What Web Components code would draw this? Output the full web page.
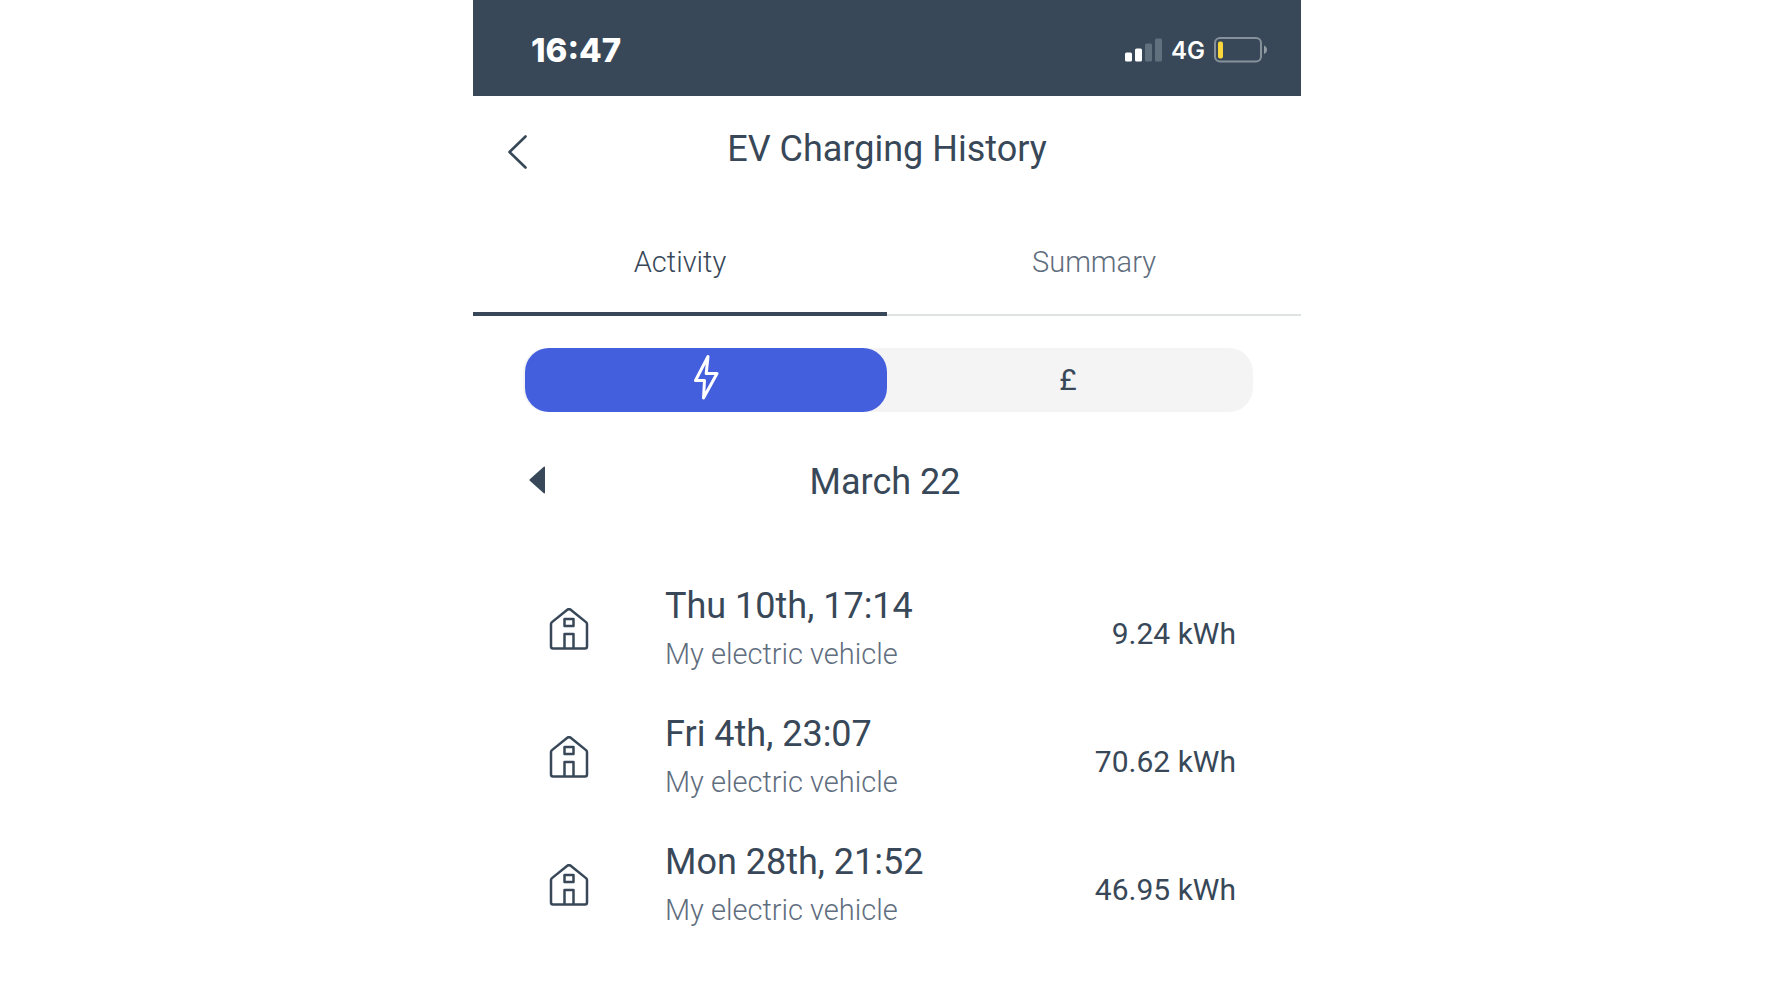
<!DOCTYPE html>
<html lang="en">
<head>
<meta charset="utf-8">
<meta name="viewport" content="width=device-width, initial-scale=1">
<title>EV Charging History</title>
<style>
  :root {
    --ink: #384858;
    --muted: #5f6e7e;
    --accent: #445fde;
    --track: #f4f4f4;
    --rule: #dfe2e2;
    --heading: 36px;
    --body: 30px;
    --light: 29px;
  }
  body { margin: 0; background: #fff; color: var(--ink); font-family: Roboto, "Open Sans", sans-serif; }
</style>
</head>
<body>
<ev-history-app></ev-history-app>

<script>
const define = (name, html, init) => {
  const template = document.createElement('template');
  template.innerHTML = `<style>
    *, *::before { box-sizing: border-box; }
    button { font: inherit; color: inherit; background: none; border: 0; padding: 0; margin: 0; cursor: pointer; }
    svg { display: block; flex: none; }
  </style>` + html;
  customElements.define(name, class extends HTMLElement {
    constructor() {
      super();
      this.attachShadow({ mode: 'open' }).append(template.content.cloneNode(true));
    }
    connectedCallback() { if (init) init(this, this.shadowRoot); }
  });
};

define('status-bar', `
  <style>
    :host { display: flex; align-items: center; justify-content: space-between; height: 96px;
      padding: 4px 34px 0 58px; box-sizing: border-box; background: var(--ink); color: #fff;
      font-family: Inter, sans-serif; }
    .time { font-size: 33px; line-height: 40px; font-weight: 800; }
    .right { display: flex; align-items: center; gap: 9px; }
    .net { font-size: 24px; line-height: 32px; font-weight: 600; padding-top: 2px; }
  </style>
  <span class="time"><slot></slot></span>
  <div class="right">
    <svg width="37" height="24" viewBox="0 0 37 24" aria-hidden="true">
      <g fill="#fff"><rect y="14.500" width="7" height="9" rx="1.500"/><rect x="10" y="10.500" width="7" height="13" rx="1.500"/></g>
      <g fill="#60707d"><rect x="20" y="5.500" width="7" height="18" rx="1.500"/><rect x="30" y=".5" width="7" height="23" rx="1.500"/></g>
    </svg>
    <span class="net"><slot name="network"></slot></span>
    <svg width="53" height="26" viewBox="0 0 53 26" aria-hidden="true">
      <rect x="1" y="1" width="46" height="23.500" rx="5" fill="none" stroke="#87919b" stroke-width="2"/>
      <rect x="4" y="4.500" width="5" height="17" rx="2" fill="#fad83c"/>
      <path d="M50 8.500c4 1.500 4 7 0 8.500z" fill="#929ca5"/>
    </svg>
  </div>`);

define('page-header', `
  <style>
    :host { display: grid; grid-template-columns: 52px 1fr 52px; align-items: center; height: 106px; padding: 0 18px; box-sizing: border-box; }
    h1 { margin: 0; text-align: center; font-size: var(--heading); line-height: 48px; font-weight: 400; }
    button { display: grid; place-items: center; height: 52px; padding-top: 6px; }
  </style>
  <button type="button" aria-label="Back">
    <svg width="20" height="34" viewBox="0 0 20 34" fill="none" stroke="currentColor" stroke-width="2.600" stroke-linecap="round" stroke-linejoin="round"><path d="M18.500 1.500 2.500 17l16 15.500"/></svg>
  </button>
  <h1><slot></slot></h1>`);

define('tab-item', `
  <style>
    :host { flex: 1; display: flex; color: var(--muted); }
    :host([selected]) { color: var(--ink); }
    button { flex: 1; height: 114px; padding: 40px 0 30px; border-bottom: 2px solid var(--rule);
      font-size: var(--light); line-height: 40px; font-weight: 300; display: flex; justify-content: center; align-items: flex-start; }
    :host([selected]) button { border-bottom: 4px solid var(--ink); }
  </style>
  <button type="button" role="tab"><slot></slot></button>`,
  (el, root) => root.querySelector('button').setAttribute('aria-selected', el.hasAttribute('selected')));

define('tab-bar', `
  <style>:host { display: flex; }</style>
  <slot></slot>`, el => el.setAttribute('role', 'tablist'));

define('unit-toggle', `
  <style>
    :host { display: flex; height: 64px; margin: 32px 48px 0 50px; padding: 0 4px 0 2px; background: var(--track); border-radius: 24px; box-sizing: border-box; }
    button { flex: 1; display: flex; justify-content: center; align-items: center; border-radius: 24px; font-size: var(--body); line-height: 40px; }
    button[aria-pressed="true"] { background: var(--accent); color: #fff; align-items: flex-start; padding-top: 6px; }
  </style>
  <button type="button" aria-pressed="true" aria-label="Energy">
    <svg width="26" height="46" viewBox="0 0 26 46" fill="none" stroke="currentColor" stroke-width="3" stroke-linejoin="round"><path d="M15 2.500 2.500 26.500h9L10.500 44 24 19.500H13.200z"/></svg>
  </button>
  <button type="button" aria-pressed="false" aria-label="Cost">£</button>`);

define('month-nav', `
  <style>
    :host { display: grid; grid-template-columns: 48px 1fr 48px; align-items: center; margin-top: 46px; padding: 0 44px 0 40px; }
    h2 { margin: 0; text-align: center; font-size: var(--heading); line-height: 48px; font-weight: 400; }
    button { display: grid; place-items: center; height: 48px; padding-bottom: 4px; }
  </style>
  <button type="button" aria-label="Previous month">
    <svg width="16" height="28" viewBox="0 0 16 28" fill="currentColor"><path d="M14.800 .8q1.200-.8 1.200.7v25q0 1.500-1.200.7L.8 14.700q-.8-.7 0-1.400z"/></svg>
  </button>
  <h2><slot></slot></h2>`);

define('charge-entry', `
  <style>
    :host { display: grid; grid-template-columns: 40px 1fr auto; align-items: center; height: 128px; padding: 0 65px 0 76px; box-sizing: border-box; }
    .text { padding-left: 76px; }
    .when, .what { display: block; line-height: 48px; }
    .when { font-size: var(--heading); }
    .what { font-size: var(--light); font-weight: 300; color: var(--muted); }
    .amount { font-size: var(--body); line-height: 40px; padding-top: 8px; }
  </style>
  <svg width="40" height="44" viewBox="0 0 40 44" fill="none" stroke="currentColor" stroke-width="2.500" stroke-linejoin="round" aria-hidden="true">
    <path d="M2 16q0-1 1-1.900L18.300 1.700q1.700-1.200 3.400 0L37 14.100q1 .9 1 1.900V38.500q0 2-2 2H4q-2 0-2-2zM15.500 40.500V26h9v14.500M15.500 11h9v7h-9z"/>
  </svg>
  <div class="text">
    <span class="when"><slot name="when"></slot></span>
    <span class="what"><slot name="vehicle"></slot></span>
  </div>
  <span class="amount"><slot name="amount"></slot></span>`,
  el => el.setAttribute('role', 'listitem'));

define('ev-history-app', `
  <style>
    :host { display: block; max-width: 828px; margin: 0 auto; }
    .list { margin-top: 60px; }
  </style>
  <status-bar>16:47<span slot="network">4G</span></status-bar>
  <page-header>EV Charging History</page-header>
  <tab-bar>
    <tab-item selected>Activity</tab-item>
    <tab-item>Summary</tab-item>
  </tab-bar>
  <main>
    <unit-toggle></unit-toggle>
    <month-nav>March 22</month-nav>
    <div class="list" role="list">
      <charge-entry>
        <span slot="when">Thu 10th, 17:14</span>
        <span slot="vehicle">My electric vehicle</span>
        <span slot="amount">9.24 kWh</span>
      </charge-entry>
      <charge-entry>
        <span slot="when">Fri 4th, 23:07</span>
        <span slot="vehicle">My electric vehicle</span>
        <span slot="amount">70.62 kWh</span>
      </charge-entry>
      <charge-entry>
        <span slot="when">Mon 28th, 21:52</span>
        <span slot="vehicle">My electric vehicle</span>
        <span slot="amount">46.95 kWh</span>
      </charge-entry>
    </div>
  </main>`);
</script>
</body>
</html>
